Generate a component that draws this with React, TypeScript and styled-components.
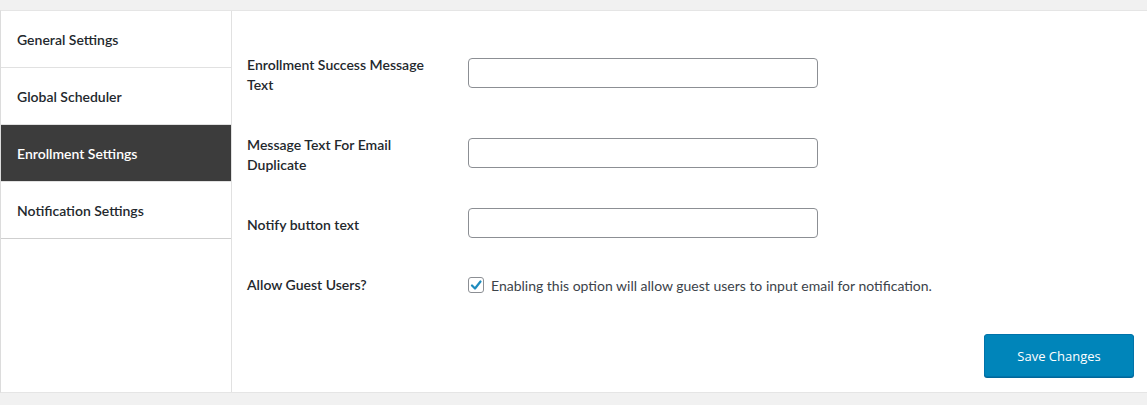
import React from "react";
import styled, { createGlobalStyle } from "styled-components";

const Global = createGlobalStyle`
  html, body { margin: 0; padding: 0; background: #f1f1f1; }
  body { font-family: Lato, "Open Sans", sans-serif; }
  * { box-sizing: border-box; }
`;

const Page = styled.div`
  padding-top: 10px;
  width: 1147px;
  height: 405px;
`;

const Panel = styled.div`
  display: flex;
  background: #fff;
  border-top: 1px solid #e5e5e5;
  border-left: 1px solid #dcdcdc;
  border-bottom: 1px solid #e5e5e5;
  height: 383px;
`;

const Sidebar = styled.nav`
  width: 231px;
  flex: none;
  border-right: 1px solid #e1e1e1;
  display: flex;
  flex-direction: column;
`;

const NavItem = styled.div<{ $active?: boolean }>`
  height: 57px;
  display: flex;
  align-items: center;
  padding-left: 16px;
  font-size: 14px;
  font-weight: 600;
  color: ${(p) => (p.$active ? "#fff" : "#23282d")};
  background: ${(p) => (p.$active ? "#3c3c3c" : "#fff")};
  border-bottom: 1px solid #e1e1e1;
  &:last-child { border-bottom-color: #cfcfcf; }
`;

const Content = styled.div`
  flex: 1;
  padding: 24px 13px 0 15px;
  display: flex;
  flex-direction: column;
`;

const Row = styled.div`
  display: grid;
  grid-template-columns: 221px 1fr;
`;

const Label = styled.div`
  padding: 20px 21px 20px 0;
  font-size: 14px;
  font-weight: 600;
  line-height: 20px;
  color: #23282d;
`;

const Field = styled.div`
  display: flex;
  align-items: center;
`;

const TextInput = styled.input`
  width: 350px;
  height: 30px;
  margin-bottom: 4px;
  border: 1px solid #8c8f94;
  border-radius: 4px;
  background: #fff;
  font: inherit;
  padding: 0 8px;
`;

const CheckRow = styled.label`
  display: flex;
  align-items: center;
  gap: 7px;
  font-size: 14px;
  color: #3c434a;
`;

const Box = styled.span`
  width: 16px;
  height: 16px;
  border: 1px solid #8c8f94;
  border-radius: 3px;
  background: #fff;
  display: flex;
  align-items: center;
  justify-content: center;
`;

const Footer = styled.div`
  display: flex;
  justify-content: flex-end;
  margin-top: 19px;
`;

const SaveButton = styled.button`
  width: 150px;
  height: 43px;
  background: #0085ba;
  border: 1px solid #0073aa;
  border-radius: 3px;
  box-shadow: 0 1px 0 #006799;
  color: #fff;
  font-family: "Open Sans", sans-serif;
  font-size: 13px;
  cursor: pointer;
`;

const tabs = ["General Settings", "Global Scheduler", "Enrollment Settings", "Notification Settings"];

export default function App() {
  return (
    <Page>
      <Global />
      <Panel>
        <Sidebar>
          {tabs.map((t) => (
            <NavItem key={t} $active={t === "Enrollment Settings"}>{t}</NavItem>
          ))}
        </Sidebar>
        <Content>
          <Row>
            <Label>Enrollment Success Message Text</Label>
            <Field><TextInput type="text" /></Field>
          </Row>
          <Row>
            <Label>Message Text For Email Duplicate</Label>
            <Field><TextInput type="text" /></Field>
          </Row>
          <Row>
            <Label>Notify button text</Label>
            <Field><TextInput type="text" /></Field>
          </Row>
          <Row>
            <Label>Allow Guest Users?</Label>
            <Field>
              <CheckRow>
                <Box>
                  <svg width="12" height="12" viewBox="0 0 12 12">
                    <path d="M2 6.5 L5 9.5 L10.5 2.5" fill="none" stroke="#1e8cbe" strokeWidth="2.2" strokeLinecap="round" strokeLinejoin="round" />
                  </svg>
                </Box>
                Enabling this option will allow guest users to input email for notification.
              </CheckRow>
            </Field>
          </Row>
          <Footer>
            <SaveButton>Save Changes</SaveButton>
          </Footer>
        </Content>
      </Panel>
    </Page>
  );
}
